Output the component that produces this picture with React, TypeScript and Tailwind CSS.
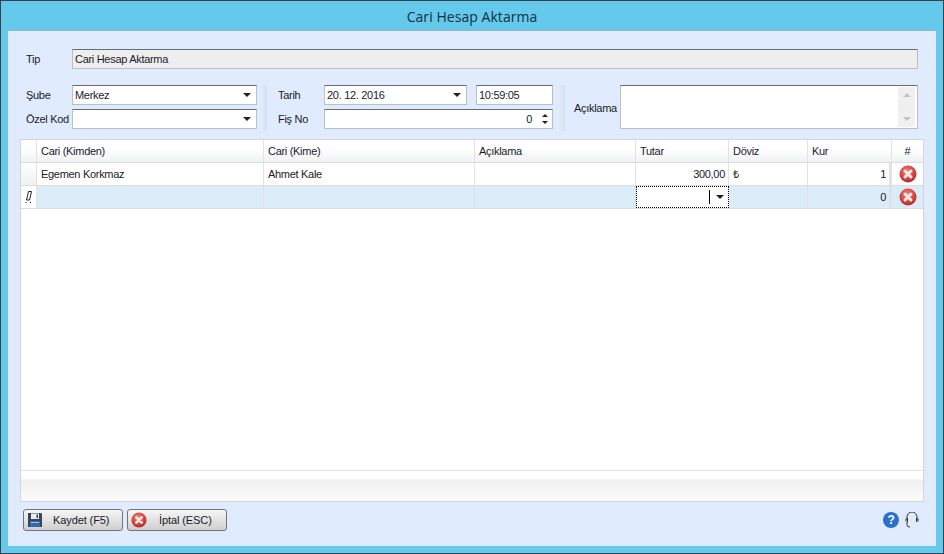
const font = { fontFamily: '"Liberation Sans", Arial, sans-serif' }

function Caret() {
  return <span className="ml-auto mr-[5px] h-0 w-0 border-x-[4px] border-t-[4px] border-x-transparent border-t-[#222]" />
}

function Field({ className = 'bg-white', children }: { className?: string; children?: React.ReactNode }) {
  return (
    <div className={`flex h-[20px] items-center border border-[#b9bfc6] border-t-[#666c74] pl-[2px] ${className}`}>
      {children}
    </div>
  )
}

function Divider() {
  return <div className="h-[46px] w-[6px] bg-gradient-to-r from-transparent to-[#d5e0ee]" />
}

function XIcon({ size = 18 }: { size?: number }) {
  return (
    <svg width={size} height={size} viewBox="0 0 18 18">
      <defs>
        <radialGradient id="red" cx="45%" cy="35%" r="70%">
          <stop offset="0%" stopColor="#ee8a84" />
          <stop offset="60%" stopColor="#d5433c" />
          <stop offset="100%" stopColor="#a92622" />
        </radialGradient>
      </defs>
      <circle cx="9" cy="9" r="8.5" fill="url(#red)" />
      <path d="M6 6l6 6M12 6l-6 6" stroke="#f2e9e8" strokeWidth="3" strokeLinecap="round" />
    </svg>
  )
}

function FloppyIcon() {
  return (
    <svg width="16" height="16" viewBox="0 0 16 16">
      <path d="M1 1h13l1 1v13H1z" fill="#3a4656" />
      <rect x="4" y="1.500" width="8" height="5.500" fill="#e9edf0" />
      <rect x="3" y="9" width="10" height="6" fill="#2f6cae" />
      <rect x="4" y="10" width="8" height="1" fill="#9fc3e6" />
      <rect x="9.500" y="2.500" width="1.500" height="3.500" fill="#3a4656" />
    </svg>
  )
}

const cols = 'grid grid-cols-[16px_227px_211px_161px_93px_79px_84px_31px]'
const cell = 'flex items-center border-r border-[#e2e2e2] pl-[4px] pr-[3px] overflow-hidden whitespace-nowrap'

const headers = ['Cari (Kimden)', 'Cari (Kime)', 'Açıklama', 'Tutar', 'Döviz', 'Kur']

export default function App() {
  return (
    <div style={font} className="flex h-[554px] w-[944px] flex-col overflow-hidden border border-[#36444e] bg-[#65c9ec] text-[11px] tracking-[-0.3px] text-[#1a1a2a]">
      <div className="flex h-[29px] shrink-0 items-center justify-center pt-[1px] text-[14px] tracking-[0.05px] text-[#10303f]" style={{ fontFamily: '"Open Sans", sans-serif' }}>
        Cari Hesap Aktarma
      </div>

      <div className="mx-[7px] mb-[7px] flex flex-1 flex-col border-t border-[#8fb5cc] bg-[#e0ecfd] px-[12px]">
        {/* Form */}
        <div className="mt-[18px] flex items-center pl-[6px] pr-[5px]">
          <span className="w-[46px]">Tip</span>
          <Field className="w-[846px] bg-[#eeeeee]">Cari Hesap Aktarma</Field>
        </div>

        <div className="mt-[16px] flex pl-[6px]">
          <div className="flex w-[231px] flex-col gap-[4px]">
            <div className="flex items-center">
              <span className="w-[46px]">Şube</span>
              <Field className="w-[185px] bg-white">Merkez<Caret /></Field>
            </div>
            <div className="flex items-center">
              <span className="w-[46px]">Özel Kod</span>
              <Field className="w-[185px] bg-white"><Caret /></Field>
            </div>
          </div>

          <div className="ml-[4px] mr-[11px]"><Divider /></div>

          <div className="flex w-[275px] flex-col gap-[4px]">
            <div className="flex items-center">
              <span className="w-[46px]">Tarih</span>
              <Field className="w-[143px] bg-white">20. 12. 2016<Caret /></Field>
              <Field className="ml-[9px] w-[77px] bg-white">10:59:05</Field>
            </div>
            <div className="flex items-center">
              <span className="w-[46px]">Fiş No</span>
              <Field className="w-[229px] bg-white">
                <span className="ml-auto mr-[10px]">0</span>
                <span className="mr-[4px] flex flex-col gap-[4px]">
                  <span className="h-0 w-0 border-x-[3px] border-b-[3px] border-x-transparent border-b-[#222]" />
                  <span className="h-0 w-0 border-x-[3px] border-t-[3px] border-x-transparent border-t-[#222]" />
                </span>
              </Field>
            </div>
          </div>

          <div className="ml-[6px] mr-[9px]"><Divider /></div>

          <span className="w-[46px] pt-[15px]">Açıklama</span>
          <div className="flex h-[44px] w-[298px] justify-end border border-[#b9bfc6] border-t-[#666c74] bg-white p-[1px]">
            <div className="mr-[1px] flex w-[17px] flex-col items-center justify-between bg-[#f0f0f0] py-[6px]">
              <span className="h-0 w-0 border-x-[4px] border-b-[4px] border-x-transparent border-b-[#c4c4c4]" />
              <span className="h-0 w-0 border-x-[4px] border-t-[4px] border-x-transparent border-t-[#c4c4c4]" />
            </div>
          </div>
        </div>

        {/* Grid */}
        <div className="mt-[8px] flex h-[363px] flex-col border border-[#d2d6da] bg-white">
          <div className={`${cols} h-[23px] border-b border-[#dcdcdc] bg-gradient-to-b from-white from-40% to-[#eff1f3]`}>
            <div className={cell} />
            {headers.map((h) => (
              <div key={h} className={cell}>{h}</div>
            ))}
            <div className="flex items-center justify-center">#</div>
          </div>

          <div className={`${cols} h-[23px] border-b border-[#dcdcdc]`}>
            <div className={`${cell} bg-gradient-to-b from-white to-[#eff1f3]`} />
            <div className={cell}>Egemen Korkmaz</div>
            <div className={cell}>Ahmet Kale</div>
            <div className={cell} />
            <div className={`${cell} justify-end`}>300,00</div>
            <div className={cell}>₺</div>
            <div className={`${cell} justify-end border-r-[3px] pr-[2px]`}>1</div>
            <div className="flex items-center justify-center"><XIcon /></div>
          </div>

          <div className={`${cols} h-[23px] border-b border-[#dcdcdc] bg-[#daecf7]`}>
            <div className="flex items-center justify-center border-r border-[#e2e2e2] bg-white">
              <svg width="10" height="14" viewBox="0 0 10 14" fill="none" stroke="#222" strokeWidth="1">
                <path d="M4.500 1.500h3L5.500 10h-3zM1.500 12.500h1M6 12.500h1" />
              </svg>
            </div>
            <div className={cell} />
            <div className={cell} />
            <div className={cell} />
            <div className="flex items-center border border-dotted border-black bg-white">
              <span className="ml-auto mr-[6px] h-[14px] w-px bg-black" />
              <span className="mr-[4px] h-0 w-0 border-x-[4px] border-t-[4px] border-x-transparent border-t-[#222]" />
            </div>
            <div className={cell} />
            <div className={`${cell} justify-end border-r-[3px] pr-[2px]`}>0</div>
            <div className="flex items-center justify-center"><XIcon /></div>
          </div>

          <div className="flex-1" />
          <div className="h-[31px] border-t border-[#e2e2e2] bg-gradient-to-b from-white from-25% via-[#f1f1f1] via-30% to-[#fbfbfb]" />
        </div>

        {/* Footer */}
        <div className="mt-[7px] flex items-center pl-[3px] pr-[5px] tracking-[-0.1px]">
          <button className="flex h-[22px] w-[100px] items-center rounded-[3px] border border-[#70757b] bg-gradient-to-b from-[#f6f6f6] to-[#cfcfcf] pl-[3px]">
            <FloppyIcon />
            <span className="ml-[10px]">Kaydet (F5)</span>
          </button>
          <button className="ml-[4px] flex h-[22px] w-[100px] items-center rounded-[3px] border border-[#70757b] bg-gradient-to-b from-[#f6f6f6] to-[#cfcfcf] pl-[3px]">
            <XIcon size={16} />
            <span className="ml-[12px]">İptal (ESC)</span>
          </button>
          <div className="ml-auto flex items-center gap-[6px]">
            <span className="flex h-[16px] w-[16px] items-center justify-center rounded-full bg-[#2a6fca] text-[12px] font-bold text-white">?</span>
            <svg width="14" height="16" viewBox="0 0 14 16" fill="none" stroke="#333" strokeWidth="1">
              <path d="M2 8V5a5 5 0 0 1 10 0v3" />
              <path d="M1 6.500v3M2.500 6v4M11.500 6v4M13 6.500v3" />
              <path d="M2 10v3q0 2 3 2" />
            </svg>
          </div>
        </div>
      </div>
    </div>
  )
}
